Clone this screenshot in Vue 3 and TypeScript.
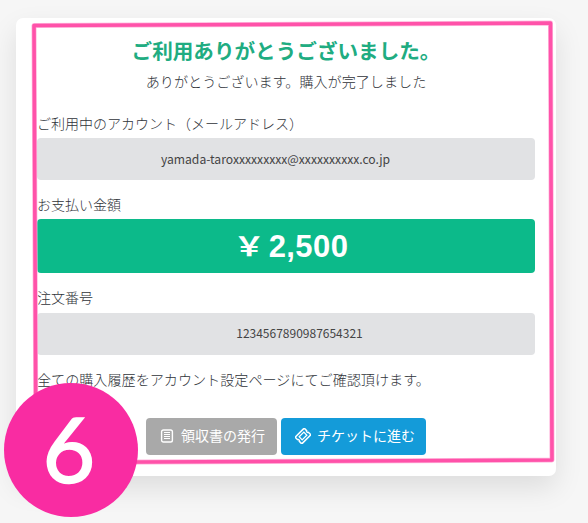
<script setup lang="ts">
interface Order {
  email: string
  amount: string
  id: string
}

const order: Order = {
  email: 'yamada-taroxxxxxxxxx@xxxxxxxxxx.co.jp',
  amount: '2,500',
  id: '1234567890987654321',
}
</script>

<template>
  <main class="page">
    <section class="card">
      <h1 class="title">ご利用ありがとうございました。</h1>
      <p class="lead">ありがとうございます。購入が完了しました</p>

      <h2 class="label">ご利用中のアカウント（メールアドレス）</h2>
      <div class="field email"><span>{{ order.email }}</span></div>

      <h2 class="label">お支払い金額</h2>
      <div class="amount"><span class="yen">￥</span><span class="num">{{ order.amount }}</span></div>

      <h2 class="label">注文番号</h2>
      <div class="field order-id"><span>{{ order.id }}</span></div>

      <p class="note">全ての購入履歴をアカウント設定ページにてご確認頂けます。</p>

      <div class="actions">
        <button class="btn receipt" type="button">
          <svg width="14" height="14" viewBox="0 0 14 14" fill="none" stroke="currentColor">
            <rect x="1.6" y="1" width="10.8" height="12" rx="1.8" stroke-width="1.4" />
            <path d="M4 3.500h6M4 5.500h6M4 7.500h6M4 9.500h6" stroke-width="1" />
          </svg>
          <span>領収書の発行</span>
        </button>
        <button class="btn ticket" type="button">
          <svg width="16" height="16" viewBox="0 0 16 16" fill="none" stroke="currentColor">
            <g transform="rotate(-45 8 8)">
              <path d="M2.600 3.300h10.800a1 1 0 0 1 1 1v2.500a1.300 1.300 0 0 0 0 2.400v2.500a1 1 0 0 1-1 1H2.600a1 1 0 0 1-1-1V9.200a1.300 1.300 0 0 0 0-2.400V4.300a1 1 0 0 1 1-1z" stroke-width="1.5" />
              <rect x="4.700" y="5.900" width="6.600" height="4.200" stroke-width="1.300" />
            </g>
          </svg>
          <span>チケットに進む</span>
        </button>
      </div>
    </section>

    <svg class="frame" width="588" height="523" viewBox="0 0 588 523" fill="none" stroke-linejoin="round">
      <path class="halo" d="M34 25.500L550.500 23L552 460L36 462.500Z" />
      <path class="line" d="M34 25.500L550.500 23L552 460L36 462.500Z" />
    </svg>
    <div class="step"><span>6</span></div>
  </main>
</template>

<style>
body {
  margin: 0;
  background: #f6f6f6;
}
</style>

<style scoped>
.page {
  position: relative;
  box-sizing: border-box;
  width: 588px;
  height: 523px;
  padding: 18px 32px 0 16px;
  overflow: hidden;
  background: #f6f6f6;
  color: #2f3339;
  font-family: "Noto Sans CJK JP", sans-serif;
}

.card {
  box-sizing: border-box;
  height: 458px;
  padding: 17px 21px 0;
  border-radius: 7px;
  background: #fff;
  box-shadow: 0 12px 28px rgba(0, 0, 0, 0.1);
}

.title {
  margin: 0;
  color: #20ac81;
  font-size: 20.6px;
  font-weight: 700;
  line-height: 30px;
  text-align: center;
  white-space: nowrap;
}

.lead {
  margin: 5px 0 20px;
  font-size: 14.1px;
  font-weight: 300;
  line-height: 22px;
  text-align: center;
}

.label {
  margin: 0;
  font-size: 14px;
  font-weight: 300;
  line-height: 22px;
  padding-bottom: 4px;
}

.field {
  display: flex;
  align-items: center;
  justify-content: center;
  box-sizing: border-box;
  height: 42px;
  padding-bottom: 1px;
  border-radius: 4px;
  background: #e1e2e4;
  color: #444;
  font-size: 12px;
}

.email {
  margin-bottom: 13px;
  padding-right: 21px;
  font-size: 12.15px;
}

.amount + .label {
  padding-bottom: 5px;
}

.order-id {
  padding-bottom: 3px;
  padding-left: 27px;
}

.amount {
  display: flex;
  align-items: center;
  justify-content: center;
  box-sizing: border-box;
  height: 54px;
  margin-bottom: 13px;
  padding-left: 12px;
  border-radius: 4px;
  background: #0cba8a;
  color: #fff;
  font-size: 30px;
  font-weight: 700;
}

.yen {
  margin-right: 7px;
  padding-bottom: 3px;
  font-size: 26px;
  transform: scaleX(1.2);
}

.num {
  padding-top: 1px;
  font-family: "Liberation Sans", sans-serif;
  font-size: 31px;
  letter-spacing: 0.4px;
}

.note {
  margin: 13px 0 28px;
  font-size: 14.1px;
  font-weight: 300;
  line-height: 22px;
}

.actions {
  display: flex;
  justify-content: center;
  gap: 4px;
}

.btn {
  display: flex;
  align-items: center;
  box-sizing: border-box;
  height: 37px;
  border: 0;
  border-radius: 4px;
  color: #fff;
  font-family: inherit;
  font-size: 14px;
  font-weight: 400;
  line-height: 20px;
  white-space: nowrap;
}

.btn span {
  padding-bottom: 3px;
}

.btn svg {
  margin-bottom: 1px;
}

.receipt {
  width: 131px;
  padding: 0 0 0 14px;
  gap: 7px;
  background: #a9a9a9;
}

.ticket {
  width: 145px;
  padding: 0 0 0 14px;
  gap: 6px;
  background: #149bd9;
}

.frame {
  position: absolute;
  top: 0;
  left: 0;
}

.halo {
  stroke: #ffb5dc;
  stroke-width: 5;
}

.line {
  stroke: #ff52a9;
  stroke-width: 3.6;
}

.step {
  position: absolute;
  top: 383px;
  left: 4px;
  display: flex;
  align-items: center;
  justify-content: center;
  box-sizing: border-box;
  width: 134px;
  height: 134px;
  padding: 0 4px 4px 0;
  border-radius: 50%;
  background: #f92ca2;
  color: #fff;
  font-family: Lato, sans-serif;
  font-size: 91px;
  font-weight: 400;
  line-height: 130px;
  -webkit-text-stroke: 1.6px #fff;
}
</style>
